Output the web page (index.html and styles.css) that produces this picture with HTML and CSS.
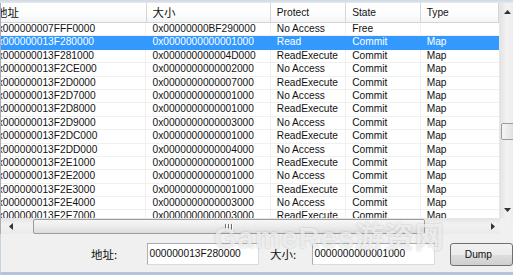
FILE: index.html
```html
<!DOCTYPE html>
<html lang="zh">
<head>
    <meta charset="UTF-8">
    <meta name="viewport" content="width=device-width, initial-scale=1.0">
    <title>Memory</title>
    <link rel="stylesheet" href="styles.css">
</head>
<body>
    <div class="window">
        <div class="frame-top"></div>

        <div class="list">
            <div class="view">
                <div class="table">
                    <div class="row head">
                        <div class="c c1"><span class="cjk">地址</span></div>
                        <div class="c c2"><span class="cjk">大小</span></div>
                        <div class="c c3">Protect</div>
                        <div class="c c4">State</div>
                        <div class="c c5">Type</div>
                    </div>
                    <div class="row">
                        <div class="c c1">0x000000007FFF0000</div>
                        <div class="c c2">0x00000000BF290000</div>
                        <div class="c c3">No Access</div>
                        <div class="c c4">Free</div>
                        <div class="c c5"></div>
                    </div>
                    <div class="row selected">
                        <div class="c c1">0x000000013F280000</div>
                        <div class="c c2">0x0000000000001000</div>
                        <div class="c c3">Read</div>
                        <div class="c c4">Commit</div>
                        <div class="c c5">Map</div>
                    </div>
                    <div class="row">
                        <div class="c c1">0x000000013F281000</div>
                        <div class="c c2">0x000000000004D000</div>
                        <div class="c c3">ReadExecute</div>
                        <div class="c c4">Commit</div>
                        <div class="c c5">Map</div>
                    </div>
                    <div class="row">
                        <div class="c c1">0x000000013F2CE000</div>
                        <div class="c c2">0x0000000000002000</div>
                        <div class="c c3">No Access</div>
                        <div class="c c4">Commit</div>
                        <div class="c c5">Map</div>
                    </div>
                    <div class="row">
                        <div class="c c1">0x000000013F2D0000</div>
                        <div class="c c2">0x0000000000007000</div>
                        <div class="c c3">ReadExecute</div>
                        <div class="c c4">Commit</div>
                        <div class="c c5">Map</div>
                    </div>
                    <div class="row">
                        <div class="c c1">0x000000013F2D7000</div>
                        <div class="c c2">0x0000000000001000</div>
                        <div class="c c3">No Access</div>
                        <div class="c c4">Commit</div>
                        <div class="c c5">Map</div>
                    </div>
                    <div class="row">
                        <div class="c c1">0x000000013F2D8000</div>
                        <div class="c c2">0x0000000000001000</div>
                        <div class="c c3">ReadExecute</div>
                        <div class="c c4">Commit</div>
                        <div class="c c5">Map</div>
                    </div>
                    <div class="row">
                        <div class="c c1">0x000000013F2D9000</div>
                        <div class="c c2">0x0000000000003000</div>
                        <div class="c c3">No Access</div>
                        <div class="c c4">Commit</div>
                        <div class="c c5">Map</div>
                    </div>
                    <div class="row">
                        <div class="c c1">0x000000013F2DC000</div>
                        <div class="c c2">0x0000000000001000</div>
                        <div class="c c3">ReadExecute</div>
                        <div class="c c4">Commit</div>
                        <div class="c c5">Map</div>
                    </div>
                    <div class="row">
                        <div class="c c1">0x000000013F2DD000</div>
                        <div class="c c2">0x0000000000004000</div>
                        <div class="c c3">No Access</div>
                        <div class="c c4">Commit</div>
                        <div class="c c5">Map</div>
                    </div>
                    <div class="row">
                        <div class="c c1">0x000000013F2E1000</div>
                        <div class="c c2">0x0000000000001000</div>
                        <div class="c c3">ReadExecute</div>
                        <div class="c c4">Commit</div>
                        <div class="c c5">Map</div>
                    </div>
                    <div class="row">
                        <div class="c c1">0x000000013F2E2000</div>
                        <div class="c c2">0x0000000000001000</div>
                        <div class="c c3">No Access</div>
                        <div class="c c4">Commit</div>
                        <div class="c c5">Map</div>
                    </div>
                    <div class="row">
                        <div class="c c1">0x000000013F2E3000</div>
                        <div class="c c2">0x0000000000001000</div>
                        <div class="c c3">ReadExecute</div>
                        <div class="c c4">Commit</div>
                        <div class="c c5">Map</div>
                    </div>
                    <div class="row">
                        <div class="c c1">0x000000013F2E4000</div>
                        <div class="c c2">0x0000000000003000</div>
                        <div class="c c3">No Access</div>
                        <div class="c c4">Commit</div>
                        <div class="c c5">Map</div>
                    </div>
                    <div class="row">
                        <div class="c c1">0x000000013F2E7000</div>
                        <div class="c c2">0x0000000000003000</div>
                        <div class="c c3">ReadExecute</div>
                        <div class="c c4">Commit</div>
                        <div class="c c5">Map</div>
                    </div>
                </div>
            </div>

            <div class="vscroll">
                <div class="arrow"><svg width="7" height="4" viewBox="0 0 7 4"><polygon points="0,4 7,4 3.5,0" fill="#333"/></svg></div>
                <div class="vtrack">
                    <div class="vthumb"></div>
                </div>
                <div class="arrow"><svg width="7" height="4" viewBox="0 0 7 4"><polygon points="0,0 7,0 3.5,4" fill="#333"/></svg></div>
            </div>

            <div class="hscroll">
                <div class="arrow"><svg width="4" height="7" viewBox="0 0 4 7"><polygon points="4,0 4,7 0,3.5" fill="#333"/></svg></div>
                <div class="htrack">
                    <div class="hthumb"><span class="grip"></span><span class="grip"></span><span class="grip"></span></div>
                </div>
                <div class="arrow"><svg width="4" height="7" viewBox="0 0 4 7"><polygon points="0,0 0,7 4,3.5" fill="#333"/></svg></div>
            </div>
            <div class="corner"></div>
        </div>

        <div class="panel">
            <label class="lbl lbl-addr">地址:</label>
            <div class="field field-addr">000000013F280000</div>
            <label class="lbl lbl-size">大小:</label>
            <div class="field field-size">0000000000001000</div>
            <button class="btn">Dump</button>
        </div>

        <div class="watermark">GameRes游资网</div>
    </div>
</body>
</html>
```

FILE: styles.css
```css
body {
    margin: 0;
    padding: 0;
    overflow: hidden;
    font-family: "Liberation Sans", "Noto Sans CJK SC", sans-serif;
    font-size: 10.2px;
    color: #111;
}

.window {
    position: relative;
    width: 513px;
    height: 275px;
    overflow: hidden;
    background: #f0f0f0;
    display: flex;
    flex-direction: column;
}

.frame-top {
    height: 3px;
    background: linear-gradient(#cfd8e2, #e4e9ef);
    flex-shrink: 0;
}

.cjk {
    font-family: "Noto Sans CJK SC", sans-serif;
    font-size: 11.5px;
}

/* list view */
.list {
    display: grid;
    grid-template-columns: 499px 17px;
    grid-template-rows: 215px 16px;
    border-left: 1px solid #a9aeb5;
    flex-shrink: 0;
}

.view {
    background: #fff;
    overflow: hidden;
    border-right: 1px solid #e6e6e6;
}

.table {
    margin-left: -15px;
}

.row {
    display: flex;
    height: 13.4px;
    line-height: 12.4px;
    border-bottom: 1px solid #f0f0f0;
    box-sizing: border-box;
    white-space: nowrap;
}

.row.head {
    height: 20px;
    line-height: 19px;
    border-bottom: 1px solid #d5d5d5;
    background: linear-gradient(#ffffff, #fdfdfd 60%, #f3f4f6);
}

.c {
    padding-left: 6px;
    box-sizing: border-box;
    border-right: 1px solid #f0f0f0;
    overflow: hidden;
}

.head .c {
    border-right: 1px solid #d5d5d5;
}

.c1 { width: 164px; }
.c2 { width: 127px; }
.c3 { width: 77px; }
.c4 { width: 76px; }
.c5 { width: 80px; border-right: none; }

.head .c1 { padding-left: 10px; }

.row.selected {
    background: #3399ff;
    color: #fff;
    border-bottom-color: #3399ff;
}

.row.selected .c {
    border-right-color: #3399ff;
}

/* scrollbars */
.vscroll {
    display: flex;
    flex-direction: column;
    background: linear-gradient(90deg, #e3e3e3, #f2f2f2 40%, #eaeaea);
}

.vscroll .arrow {
    height: 17px;
    display: flex;
    align-items: center;
    justify-content: center;
    padding-right: 3px;
}

.vtrack {
    flex: 1;
    padding-top: 103px;
}

.vthumb {
    height: 15px;
    margin: 0 0 0 1px;
    border: 1px solid #9c9c9c;
    border-radius: 2px;
    background: linear-gradient(90deg, #f5f5f5, #e9e9e9 50%, #d9d9d9);
}

.hscroll {
    display: flex;
    align-items: stretch;
    background: linear-gradient(#e3e3e3, #f2f2f2 40%, #eaeaea);
}

.hscroll .arrow {
    width: 32px;
    display: flex;
    align-items: center;
    justify-content: center;
    padding-right: 12px;
    box-sizing: border-box;
}

.hscroll .arrow:last-child {
    width: 17px;
    padding-right: 0;
    padding-left: 2px;
}

.htrack {
    flex: 1;
    padding: 1px 58px 0 0;
}

.hthumb {
    height: 13px;
    border: 1px solid #9c9c9c;
    border-radius: 2px;
    background: linear-gradient(#f6f6f6, #ececec 50%, #dcdcdc);
    display: flex;
    justify-content: center;
    align-items: center;
    gap: 1px;
}

.grip {
    width: 1px;
    height: 6px;
    background: #6e6e6e;
    box-shadow: 1px 0 0 #fff;
    margin-right: 1px;
}

.corner {
    background: #f0f0f0;
}

/* bottom panel */
.panel {
    flex: 1;
    display: flex;
    align-items: center;
    padding: 2px 0 0 90px;
    border-bottom: 3px solid #b3c5d9;
    border-left: 1px solid #c7d3e0;
}

.lbl {
    font-family: "Noto Sans CJK SC", sans-serif;
    font-size: 11.5px;
    color: #111;
}

.lbl-addr { width: 33px; margin-right: 23px; }
.lbl-size { width: 30px; margin: 0 12px 0 11px; }

.field {
    height: 22px;
    line-height: 20px;
    box-sizing: border-box;
    background: #fff;
    border: 1px solid #d8dbe0;
    border-top-color: #abadb3;
    border-left-color: #abadb3;
    padding-left: 2px;
    font-size: 10.2px;
}

.field-addr { width: 114px; }
.field-size { width: 125px; }

.btn {
    width: 64px;
    height: 23px;
    margin-left: 15px;
    padding: 0 6px 0 0;
    border: 1px solid #707070;
    border-radius: 3px;
    background: linear-gradient(#f2f2f2, #ebebeb 50%, #dddddd 51%, #cfcfcf);
    font-family: "Liberation Sans", sans-serif;
    font-size: 10.2px;
    color: #111;
}

.watermark {
    position: absolute;
    left: 214px;
    top: 214px;
    font-family: "Liberation Sans", "Noto Sans CJK SC", sans-serif;
    font-weight: bold;
    font-size: 29px;
    letter-spacing: 1px;
    color: rgba(255, 255, 255, 0.7);
    text-shadow: 0 0 2px rgba(90, 90, 90, 0.35);
    pointer-events: none;
}
```
